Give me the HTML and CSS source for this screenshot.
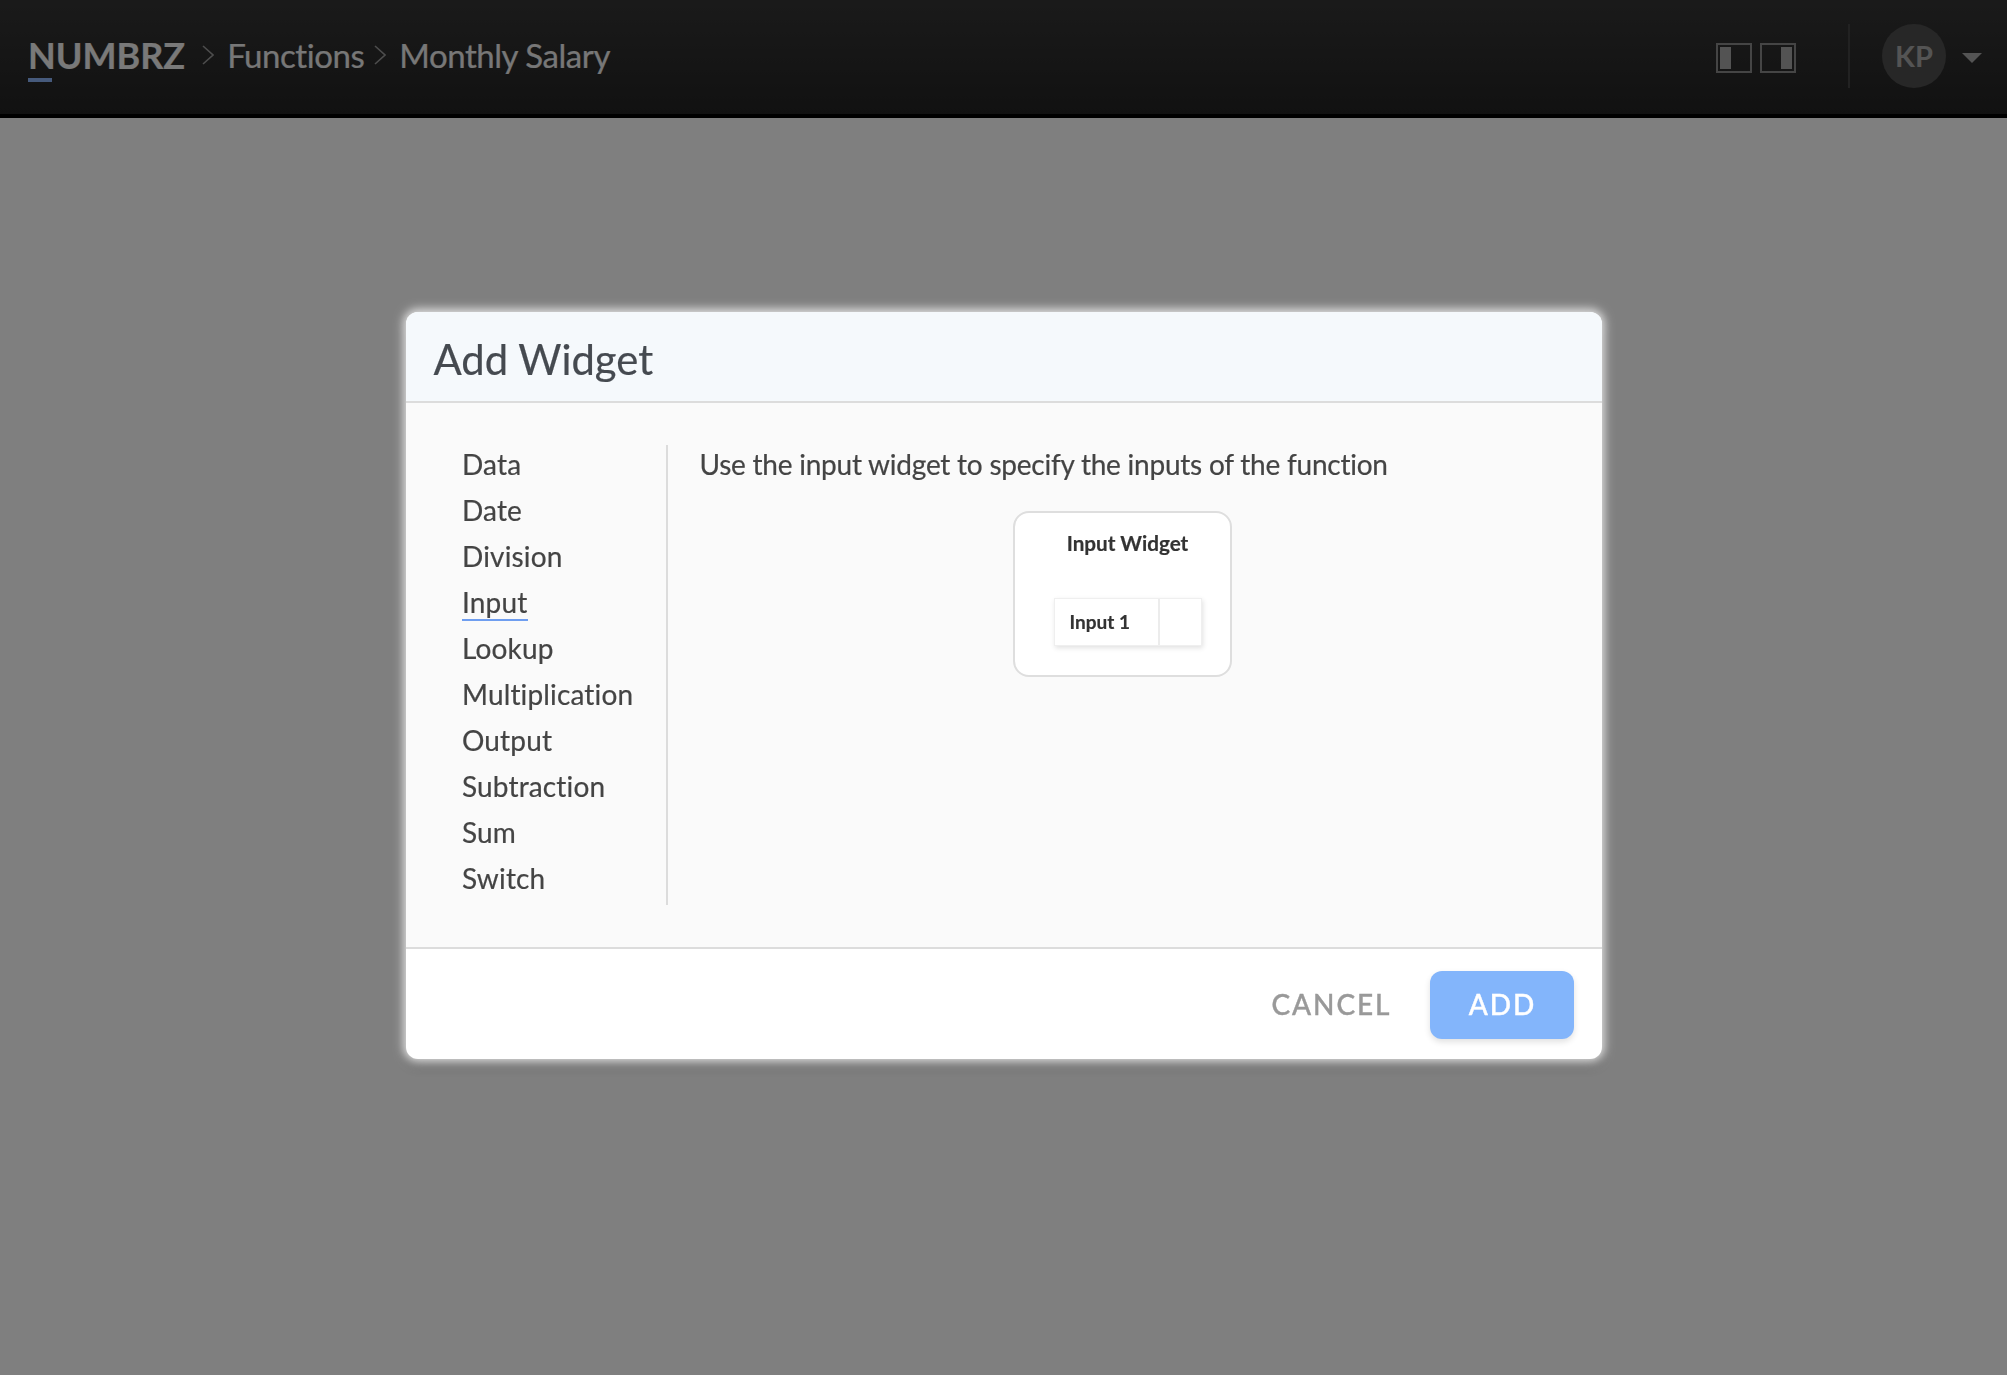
FILE: index.html
```html
<!DOCTYPE html>
<html lang="en">
<head>
<meta charset="utf-8">
<title>Numbrz – Monthly Salary</title>
<link rel="stylesheet" href="styles.css">
</head>
<body>
<header class="topbar">
  <nav class="crumbs">
    <span class="brand">NUMBRZ</span>
    <svg class="chev chev-first" viewBox="0 0 12 20" width="12" height="20"><path d="M1 1 L11 10 L1 19" fill="none" stroke="currentColor" stroke-width="1.6"/></svg>
    <span class="crumb">Functions</span>
    <svg class="chev" viewBox="0 0 12 20" width="12" height="20"><path d="M1 1 L11 10 L1 19" fill="none" stroke="currentColor" stroke-width="1.6"/></svg>
    <span class="crumb">Monthly Salary</span>
  </nav>
  <div class="tools">
    <div class="panes">
      <span class="pane pane-left"><i></i></span>
      <span class="pane pane-right"><i></i></span>
    </div>
    <span class="sep"></span>
    <span class="avatar">KP</span>
    <svg class="caret" viewBox="0 0 20 10" width="20" height="10"><path d="M0 0 H20 L10 10 Z" fill="currentColor"/></svg>
  </div>
</header>
<main class="page"></main>
<div class="overlay">
  <section class="modal">
    <h1 class="modal-title">Add Widget</h1>
    <div class="modal-body">
      <ul class="types">
        <li>Data</li>
        <li>Date</li>
        <li>Division</li>
        <li><span class="active">Input</span></li>
        <li>Lookup</li>
        <li>Multiplication</li>
        <li>Output</li>
        <li>Subtraction</li>
        <li>Sum</li>
        <li>Switch</li>
      </ul>
      <div class="detail">
        <p class="desc">Use the input widget to specify the inputs of the function</p>
        <div class="widget">
          <div class="widget-name">Input Widget</div>
          <div class="widget-row">
            <span class="widget-label">Input 1</span>
            <span class="widget-slot"></span>
          </div>
        </div>
      </div>
    </div>
    <footer class="modal-foot">
      <button class="btn btn-text" type="button">CANCEL</button>
      <button class="btn btn-primary" type="button">ADD</button>
    </footer>
  </section>
</div>
</body>
</html>
```
FILE: styles.css
```css
* { box-sizing: border-box; }
html, body { margin: 0; height: 100%; }
body {
  background: #fff;
  font-family: Lato, "Open Sans", sans-serif;
  font-variant-ligatures: none;
  color: #444;
  overflow: hidden;
}
.topbar {
  height: 118px;
  display: flex;
  align-items: center;
  justify-content: space-between;
  background: linear-gradient(#353535, #232323);
  border-bottom: 4px solid #000;
  padding: 0 25px 4px 28px;
}
.crumbs { display: flex; align-items: center; color: #f2f2f2; -webkit-text-stroke: 0.2px currentColor; }
.brand {
  font-size: 36px;
  font-weight: 700;
  position: relative;
}
.brand::after {
  content: "";
  position: absolute;
  left: 0;
  top: 45px;
  width: 24px;
  height: 4px;
  background: #8cb4f8;
}
.crumb { font-size: 33px; letter-spacing: -0.45px; color: #efefef; }
.chev { color: #9a9a9a; margin: 0 13px 0 10px; flex: none; }
.chev-first { margin: 0 13px 0 17px; }
.tools { display: flex; align-items: center; margin-top: 2px; }
.panes { display: flex; gap: 8px; margin-top: 3px; }
.pane {
  width: 36px;
  height: 30px;
  border: 2px solid #8a8a8a;
  padding: 2px;
  display: flex;
}
.pane i { width: 11px; background: #a6a6a6; display: block; }
.pane-right { justify-content: flex-end; }
.sep { width: 2px; height: 64px; background: #444; margin: 0 32px 0 52px; }
.avatar {
  width: 64px;
  height: 64px;
  border-radius: 50%;
  background: #4e4e4e;
  color: #a8a8a8;
  font-size: 29px;
  font-weight: 700;
  padding-bottom: 2px;
  display: flex;
  align-items: center;
  justify-content: center;
}
.caret { color: #a8a8a8; margin: 4px 0 0 16px; }
.page { height: calc(100% - 118px); }
.overlay {
  position: fixed;
  inset: 0;
  background: rgba(0, 0, 0, 0.5);
  display: flex;
  justify-content: center;
  align-items: flex-start;
  padding-top: 312px;
}
.modal {
  width: 1196px;
  height: 747px;
  border-radius: 12px;
  background: #fff;
  box-shadow: 0 0 10px 3px rgba(255, 255, 255, 0.8), 0 6px 14px rgba(0, 0, 0, 0.25);
  display: flex;
  flex-direction: column;
  overflow: hidden;
}
.modal-title {
  margin: 0;
  height: 91px;
  padding: 3px 0 0 28px;
  font-size: 41.8px;
  line-height: 89px;
  font-weight: 400;
  color: #454a50;
  background: #f5f9fc;
  border-bottom: 2px solid #dcdcdc;
  -webkit-text-stroke: 0.2px currentColor;
}
.modal-body {
  height: 546px;
  flex: none;
  background: #fafafa;
  border-bottom: 2px solid #dcdcdc;
  padding: 42px 0 0 56.5px;
  display: flex;
  -webkit-text-stroke: 0.2px currentColor;
}
.types {
  list-style: none;
  margin: 0;
  padding: 0;
  width: 205.5px;
  height: 460px;
  border-right: 2px solid #dcdcdc;
  font-size: 28px;
  letter-spacing: 0.15px;
}
.types li { height: 46px; line-height: 46px; }
.types li:first-child { margin-top: -4px; }
.active { display: inline-block; height: 42px; border-bottom: 2px solid #6f9ef0; padding-right: 1px; }
.detail { padding-left: 32px; }
.desc { margin: -4px 0 0; font-size: 28px; line-height: 46px; letter-spacing: -0.235px; }
.widget {
  width: 219px;
  height: 166px;
  margin: 24px 0 0 313px;
  background: #fff;
  border: 2px solid #dedede;
  border-radius: 16px;
  padding: 0 0 0 39px;
}
.widget-name {
  width: 150px;
  text-align: center;
  font-size: 20.7px;
  font-weight: 700;
  color: #333;
  line-height: 24px;
  margin: 18px 0 43px -1px;
  white-space: nowrap;
}
.widget-row {
  display: flex;
  width: 148px;
  height: 48px;
  background: #fff;
  border: 1px solid #efefef;
  box-shadow: 1px 2px 5px rgba(0, 0, 0, 0.12);
}
.widget-label {
  width: 105px;
  border-right: 2px solid #ececec;
  padding-left: 15px;
  line-height: 46px;
  font-size: 19px;
  font-weight: 700;
  color: #333;
}
.modal-foot {
  flex: 1;
  display: flex;
  align-items: flex-start;
  justify-content: flex-end;
  padding: 22px 28px 0 0;
  gap: 38px;
}
.btn {
  font-family: inherit;
  font-size: 28px;
  font-weight: 500;
  letter-spacing: 1.95px;
  border: 0;
  background: none;
  height: 68px;
  padding: 0 0 2px;
  -webkit-text-stroke: 0.4px currentColor;
}
.btn-text { color: #999; }
.btn-primary {
  width: 144px;
  padding-left: 2px;
  background: #83b5fb;
  color: #fff;
  border-radius: 12px;
  box-shadow: 0 3px 6px rgba(0, 0, 0, 0.12);
}
```
